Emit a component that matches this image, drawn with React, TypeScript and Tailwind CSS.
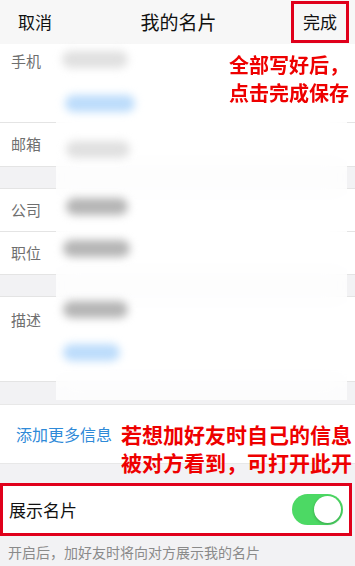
import React from "react";

const font = { fontFamily: '"Noto Sans CJK SC", "Noto Sans", sans-serif' };

function Pill({ w, ml, tone }: { w: number; ml: number; tone: "faint" | "dark" | "blue" }) {
  const color =
    tone === "faint" ? "bg-[#e0e0e0]" : tone === "dark" ? "bg-[#b5b5b5]" : "bg-[#bcdcfb]";
  return (
    <div
      className={`h-[17px] rounded-full blur-[4px] ${color}`}
      style={{ width: w, marginLeft: ml }}
    />
  );
}

export default function App() {
  return (
    <div className="w-[355px] h-[566px] bg-[#f2f2f4] overflow-hidden relative" style={font}>
      {/* header */}
      <div className="h-[44px] bg-[#f7f7f7] flex items-center pl-[18px] pr-[6px]">
        <div className="flex-1">
          <span className="text-[17px] text-[#111]">取消</span>
        </div>
        <span className="text-[19px] text-[#111] mr-[10px]">我的名片</span>
        <div className="flex-1 flex justify-end">
          <span className="h-[42px] border-[3px] border-[#e0001b] flex items-center px-[9px] text-[17px] text-[#111]">
            完成
          </span>
        </div>
      </div>

      <div className="relative">
        {/* rows */}
        <div className="bg-white h-[79px] flex border-b border-[#e4e4e4]">
          <span className="pl-[11px] pt-[6px] text-[15px] text-[#6f6f6f]">手机</span>
        </div>
        <div className="bg-white h-[44px] flex items-center border-b border-[#e4e4e4]">
          <span className="pl-[11px] text-[15px] text-[#6f6f6f]">邮箱</span>
        </div>
        <div className="h-[21px]" />
        <div className="bg-white h-[44px] flex items-center border-y border-[#e4e4e4]">
          <span className="pl-[11px] text-[15px] text-[#6f6f6f]">公司</span>
        </div>
        <div className="bg-white h-[43px] flex items-center border-b border-[#e4e4e4]">
          <span className="pl-[11px] text-[15px] text-[#6f6f6f]">职位</span>
        </div>
        <div className="h-[21px]" />
        <div className="bg-white h-[86px] flex border-y border-[#e4e4e4]">
          <span className="pl-[11px] pt-[12px] text-[15px] text-[#6f6f6f]">描述</span>
        </div>

        {/* blurred overlay over the field values */}
        <div className="absolute left-[56px] top-0 w-[291px] h-[356px] bg-white/75 backdrop-blur-md flex flex-col">
          <div className="pt-[7px]">
            <Pill w={66} ml={6} tone="faint" />
          </div>
          <div className="pt-[27px]">
            <Pill w={70} ml={9} tone="blue" />
          </div>
          <div className="pt-[29px]">
            <Pill w={64} ml={10} tone="faint" />
          </div>
          <div className="pt-[40px]">
            <Pill w={62} ml={10} tone="dark" />
          </div>
          <div className="pt-[25px]">
            <Pill w={67} ml={7} tone="dark" />
          </div>
          <div className="pt-[44px]">
            <Pill w={65} ml={7} tone="dark" />
          </div>
          <div className="pt-[26px]">
            <Pill w={57} ml={7} tone="blue" />
          </div>
        </div>

        {/* annotation */}
        <div className="absolute right-[6px] top-[7px] z-10 text-[20px] leading-[28px] font-bold text-[#ee0000] text-right">
          <div>全部写好后，</div>
          <div>点击完成保存</div>
        </div>
      </div>

      <div className="h-[22px]" />
      <div className="relative bg-white h-[60px] flex items-center border-y border-[#e8e8e8]">
        <span className="pl-[16px] text-[16px] text-[#2f8ad8]">添加更多信息</span>
        <div className="absolute left-[121px] top-[15px] text-[21px] leading-[28px] font-bold text-[#ee0000]">
          <div>若想加好友时自己的信息</div>
          <div>被对方看到，可打开此开</div>
        </div>
      </div>

      <div className="h-[19px]" />
      <div className="mr-[3px] h-[53px] border-[3px] border-[#e0001b] bg-white flex items-center justify-between pl-[6px] pr-[6px]">
        <span className="text-[17px] text-[#111]">展示名片</span>
        <div className="w-[51px] h-[31px] rounded-full bg-[#4cd964] flex items-center justify-end p-[2px]">
          <div className="w-[27px] h-[27px] rounded-full bg-white shadow-[0_1px_3px_rgba(0,0,0,0.25)]" />
        </div>
      </div>
      <div className="pl-[8px] pt-[6px] text-[14px] text-[#8a8a8a]">
        开启后，加好友时将向对方展示我的名片
      </div>
    </div>
  );
}
